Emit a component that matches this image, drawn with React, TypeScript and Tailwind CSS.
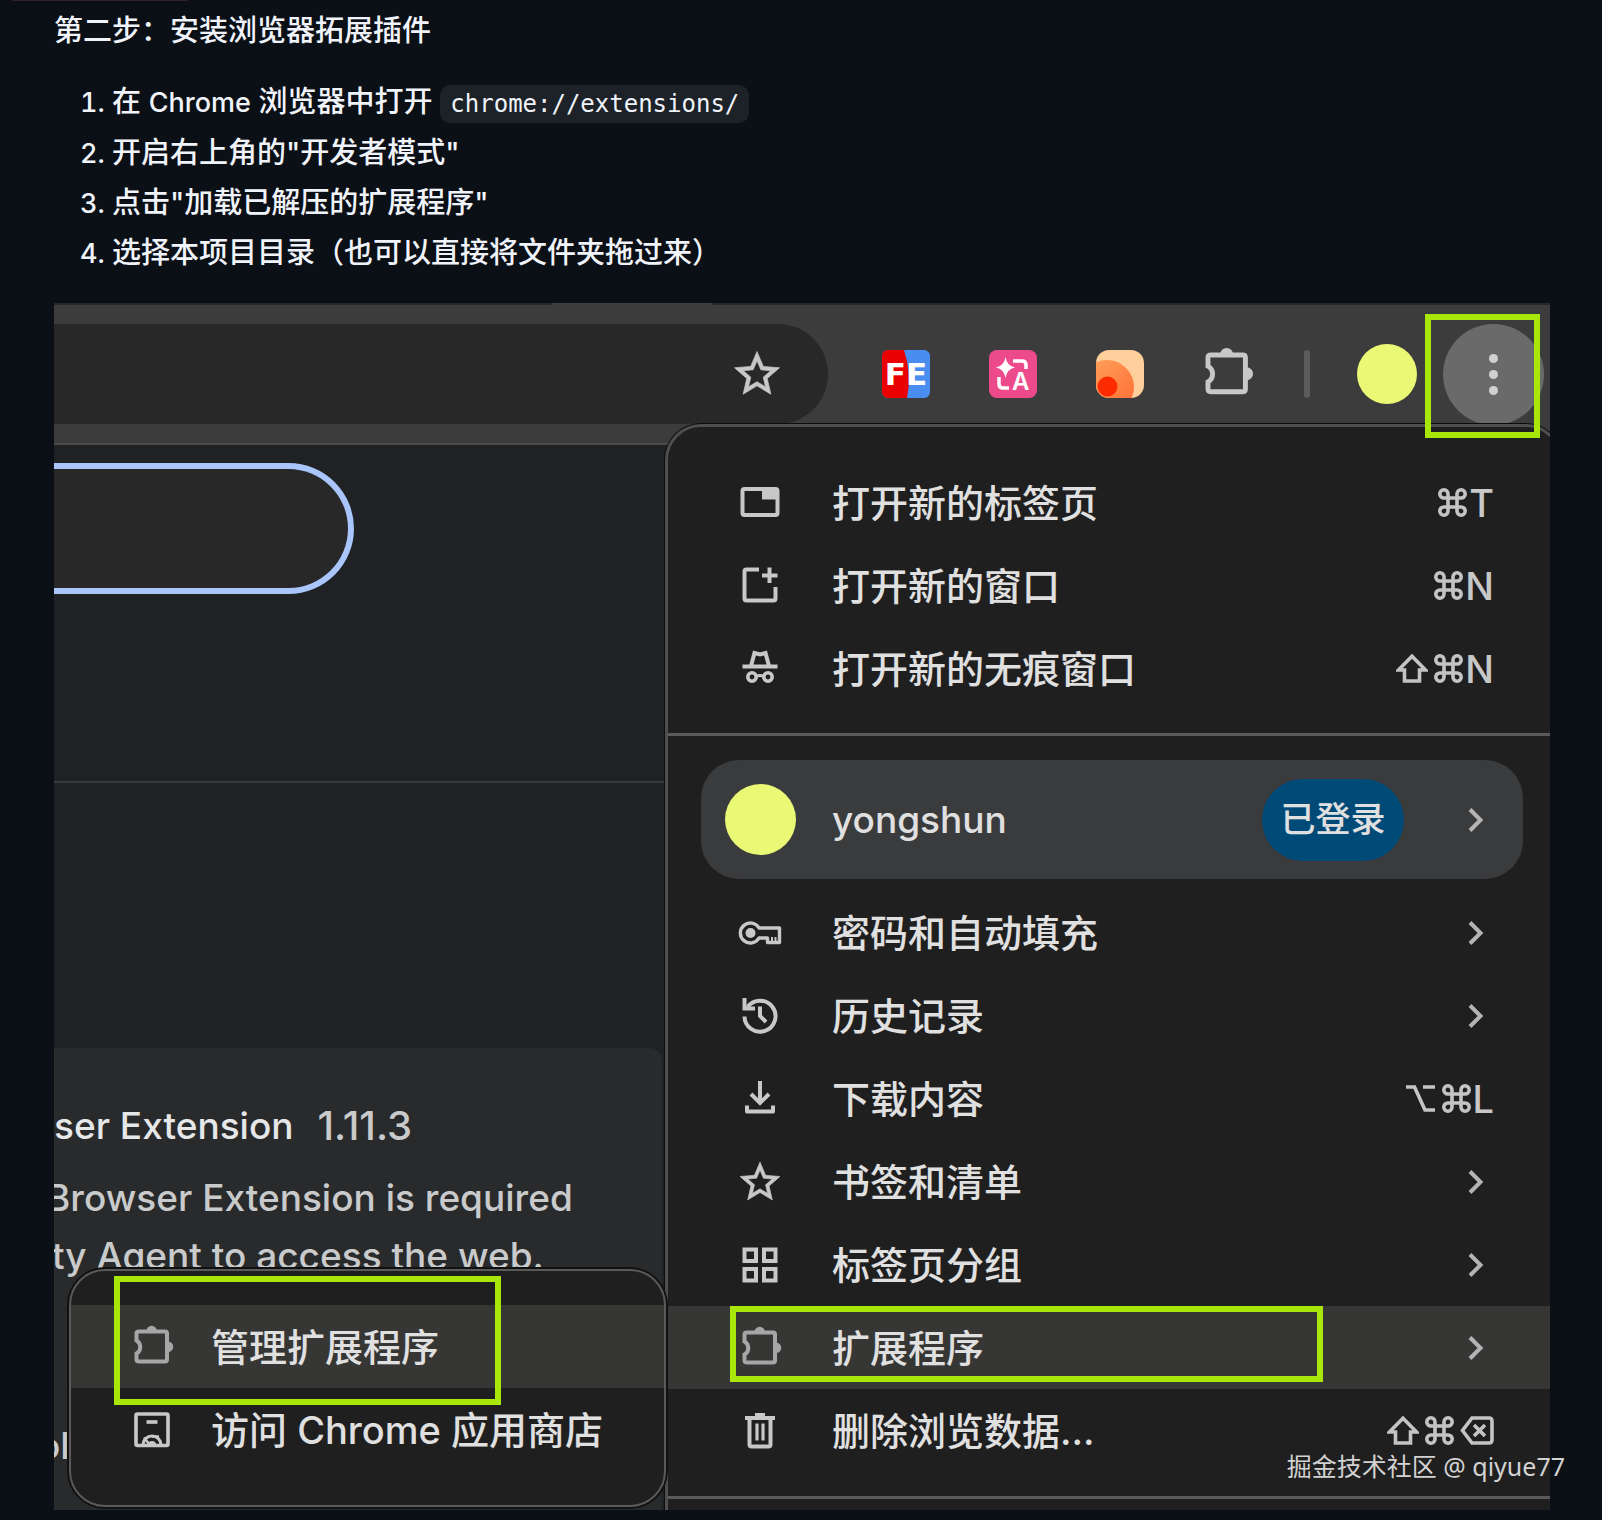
import type { ReactNode } from "react";

type IconProps = { className?: string };

function StarIcon({ className = "" }: IconProps) {
  return (
    <svg viewBox="0 0 24 24" fill="currentColor" className={className}>
      <path
        d="M22 9.24l-7.19-.62L12 2 9.19 8.63 2 9.24l5.46 4.73L5.82 21 12 17.27 18.18 21l-1.63-7.03L22 9.24zM12 15.4l-3.76 2.27 1-4.28-3.32-2.88 4.38-.38L12 6.1l1.71 4.04 4.38.38-3.32 2.88 1 4.28L12 15.4z"
        stroke="currentColor"
        strokeWidth="0.3"
      />
    </svg>
  );
}

function PuzzleIcon({ className = "" }: IconProps) {
  return (
    <svg viewBox="0 0 44 44" fill="none" className={className}>
      <path
        d="M9 6.5H35Q37 6.5 37 8.5V34.5Q37 36.5 35 36.5H9Q6.5 36.5 6.5 34.5V28.5A7.5 7.5 0 0 0 6.5 15.5V8.5Q6.5 6.5 9 6.5Z"
        stroke="currentColor"
        strokeWidth="4"
      />
      <path
        d="M16.5 6A5.2 5.2 0 0 1 26.9 6ZM38 16.5A5.2 5.2 0 0 1 38 27Z"
        fill="currentColor"
      />
    </svg>
  );
}

function LineIcon({ children }: { children: ReactNode }) {
  return (
    <svg
      viewBox="0 0 44 44"
      fill="none"
      stroke="currentColor"
      strokeWidth="4"
      className="size-11"
    >
      {children}
    </svg>
  );
}

function ChevronIcon() {
  return (
    <svg
      viewBox="0 0 36 36"
      fill="none"
      stroke="currentColor"
      strokeWidth="4"
      className="size-9 shrink-0 text-[#b4b4b4]"
    >
      <path d="M12 7.5L22.5 18L12 28.5" />
    </svg>
  );
}

const icons = {
  tab: (
    <LineIcon>
      <rect x="4.5" y="8" width="35" height="26" rx="2" />
      <path d="M24 7H40V18.5H24Z" fill="currentColor" stroke="none" />
    </LineIcon>
  ),
  window: (
    <LineIcon>
      <path d="M21 5.5H8.5Q6.5 5.5 6.5 7.5V34.5Q6.5 36.5 8.5 36.5H35.5Q37.5 36.5 37.5 34.5V23" />
      <path d="M31.5 3.5V19M24 11.5H39.5" />
    </LineIcon>
  ),
  incognito: (
    <LineIcon>
      <path d="M13 19L16.5 6L22 7.5L27.5 6L31 19" />
      <path d="M4.5 19.5H39.5" />
      <circle cx="14" cy="30" r="4.2" strokeWidth="3.6" />
      <circle cx="30" cy="30" r="4.2" strokeWidth="3.6" />
      <path d="M18 29.5Q22 27.5 26 29.5" strokeWidth="3" />
    </LineIcon>
  ),
  key: (
    <LineIcon>
      <path
        d="M21 17H41.5V31.5H29.5V27H21A10 10 0 1 1 21 17Z"
        strokeWidth="3.4"
        strokeLinejoin="round"
      />
      <circle cx="12.5" cy="22" r="5" fill="currentColor" stroke="none" />
      <path d="M34 31V26M37.5 31V26" strokeWidth="2" />
    </LineIcon>
  ),
  history: (
    <LineIcon>
      <path d="M6.5 22.5A15.5 15.5 0 1 0 9.5 13" />
      <path d="M6.5 4V14.5H17" />
      <path d="M22 12.5V22L28 28" />
    </LineIcon>
  ),
  download: (
    <LineIcon>
      <path d="M22 4V25M13 17L22 26L31 17" />
      <path d="M9 28.5V34.5H35V28.5" strokeLinejoin="round" />
    </LineIcon>
  ),
  star: <StarIcon className="-m-0.5 size-12" />,
  groups: (
    <LineIcon>
      <rect x="6.5" y="6.5" width="11.5" height="11.5" />
      <rect x="26" y="6.5" width="11.5" height="11.5" />
      <rect x="6.5" y="26" width="11.5" height="11.5" />
      <rect x="26" y="26" width="11.5" height="11.5" />
    </LineIcon>
  ),
  puzzle: <PuzzleIcon className="size-11 text-[#a6a6a6]" />,
  trash: (
    <LineIcon>
      <path d="M7 9H37" />
      <path d="M17 6H27" />
      <path d="M11.5 9V35.5Q11.5 37.5 13.5 37.5H30.5Q32.5 37.5 32.5 35.5V9" />
      <path d="M19 14.5V31.5M25 14.5V31.5" strokeWidth="3.2" />
    </LineIcon>
  ),
  store: (
    <LineIcon>
      <rect x="6" y="6" width="32" height="31.5" rx="1.5" strokeWidth="3.6" />
      <path d="M16.5 14H27.5" strokeWidth="3.6" />
      <path d="M13 37A9 9 0 0 1 31 37" strokeWidth="3" />
      <path d="M18 37A4 4 0 0 1 26 37" fill="currentColor" stroke="none" />
      <path d="M14 29.5L19 36M22 28.5H29" strokeWidth="2.6" />
    </LineIcon>
  ),
};

// modifier keys of the shortcuts
const keySymbols = {
  shift: (
    <svg viewBox="0 0 32 29" role="img" aria-label="⇧" className="h-[29px] w-8">
      <path d="M16 2.2L29.5 16H23.5V27H8.5V16H2.5Z" />
    </svg>
  ),
  command: (
    <svg viewBox="0 0 29 29" role="img" aria-label="⌘" className="size-[29px]">
      <path d="M10 10V6A4.1 4.1 0 1 0 6 10H23A4.1 4.1 0 1 0 19 6V23A4.1 4.1 0 1 0 23 19H6A4.1 4.1 0 1 0 10 23Z" />
    </svg>
  ),
  option: (
    <svg viewBox="0 0 31 29" role="img" aria-label="⌥" className="h-[29px] w-[31px]">
      <path d="M1 3H9.5L20 26H30M18 3H30" />
    </svg>
  ),
  delete: (
    <svg viewBox="0 0 34 29" role="img" aria-label="⌫" className="h-[29px] w-[34px]">
      <path d="M12 2H29Q32 2 32 5V24Q32 27 29 27H12L2.5 14.5Z" />
      <path d="M14 9L25 20M25 9L14 20" />
    </svg>
  ),
};

type MenuRow = {
  icon: keyof typeof icons;
  label: string;
  keys?: (keyof typeof keySymbols)[];
  letter?: string;
};

const newItems: MenuRow[] = [
  { icon: "tab", label: "打开新的标签页", keys: ["command"], letter: "T" },
  { icon: "window", label: "打开新的窗口", keys: ["command"], letter: "N" },
  {
    icon: "incognito",
    label: "打开新的无痕窗口",
    keys: ["shift", "command"],
    letter: "N",
  },
];

const toolItems: MenuRow[] = [
  { icon: "key", label: "密码和自动填充" },
  { icon: "history", label: "历史记录" },
  {
    icon: "download",
    label: "下载内容",
    keys: ["option", "command"],
    letter: "L",
  },
  { icon: "star", label: "书签和清单" },
  { icon: "groups", label: "标签页分组" },
  { icon: "puzzle", label: "扩展程序" },
  {
    icon: "trash",
    label: "删除浏览数据...",
    keys: ["shift", "command", "delete"],
  },
];

function MenuItem({ icon, label, keys, letter }: MenuRow) {
  const active = icon === "puzzle";

  return (
    <button
      type="button"
      className={`relative flex h-[83px] w-full items-center pl-[70px] pr-[65px] text-left ${
        active ? "bg-[#363635]" : ""
      }`}
    >
      <span className="shrink-0 text-[#c8c8c8]">{icons[icon]}</span>
      <span className="ml-[50px] flex-1 whitespace-nowrap text-[38px] leading-[56px]">
        {label}
      </span>
      {keys ? (
        <span className="flex items-center gap-1.5 fill-none stroke-[#c4c4c4] stroke-[3.6] text-[38px] leading-[56px] text-[#c8c8c8]">
          {keys.map((key) => (
            <span key={key}>{keySymbols[key]}</span>
          ))}
          {letter && <span className="-ml-1 stroke-none">{letter}</span>}
        </span>
      ) : (
        <ChevronIcon />
      )}
      {active && (
        <span className="absolute left-[62px] top-0 h-[76px] w-[593px] border-6 border-[#a9e70b]" />
      )}
    </button>
  );
}

function Toolbar() {
  return (
    <div className="relative flex h-[142px] items-center border-y-2 border-b-[#4a4a4a] border-t-[#25272a] bg-[#3c3c3c] pr-1.5">
      <div className="absolute -top-0.5 left-[498px] h-0.5 w-[160px] bg-[#3c3f41]" />

      <div className="flex h-[100px] flex-1 items-center justify-end rounded-r-full bg-[#282828] pr-11">
        <button type="button" aria-label="书签" className="text-[#c8c8c8]">
          <StarIcon className="size-[54px]" />
        </button>
      </div>

      <button
        type="button"
        className="relative ml-[54px] flex size-12 shrink-0 items-center justify-center overflow-hidden rounded-md bg-[#4a8df0]"
      >
        <svg viewBox="0 0 48 48" className="absolute inset-0">
          <path d="M0 0H22Q30 24 25 48H0Z" fill="#ea0000" />
        </svg>
        <span className="relative font-['DejaVu_Sans',sans-serif] text-[31px] font-bold leading-none text-white">
          FE
        </span>
      </button>

      <button type="button" aria-label="翻译" className="ml-[59px] shrink-0">
        <svg viewBox="0 0 48 48" className="size-12">
          <rect width="48" height="48" rx="8" fill="#ec4a8b" />
          <path
            d="M16.5 7Q18 16 26 17.5Q18 19 16.5 28Q15 19 7 17.5Q15 16 16.5 7Z"
            fill="#fff"
          />
          <path
            d="M24 11H33Q37 11 37 15V19M10 27V34Q10 38 14 38H20"
            fill="none"
            stroke="#fff"
            strokeWidth="3.5"
          />
          <text
            x="23"
            y="40"
            fill="#fff"
            fontSize="24"
            fontWeight="600"
            fontFamily="Inter, sans-serif"
          >
            A
          </text>
        </svg>
      </button>

      <button type="button" aria-label="扩展" className="ml-[59px] shrink-0">
        <svg viewBox="0 0 48 48" className="size-12">
          <defs>
            <clipPath id="tile">
              <rect width="48" height="48" rx="13" />
            </clipPath>
            <linearGradient id="ring" x1="0" y1="0" x2="1" y2="1">
              <stop offset="0" stopColor="#ffa65c" />
              <stop offset="1" stopColor="#ff6a35" />
            </linearGradient>
          </defs>
          <g clipPath="url(#tile)">
            <rect width="48" height="48" fill="#ffcf9c" />
            <circle cx="11" cy="37" r="27" fill="url(#ring)" />
            <circle cx="11.5" cy="36.5" r="10" fill="#ff2b00" />
          </g>
        </svg>
      </button>

      <button
        type="button"
        aria-label="扩展程序"
        className="ml-14 shrink-0 text-[#c8c8c8]"
      >
        <PuzzleIcon className="size-[54px]" />
      </button>

      <div className="ml-[50px] h-12 w-1.5 shrink-0 rounded-full bg-[#5c5c5c]" />

      <div className="ml-[47px] size-[60px] shrink-0 rounded-full bg-[#e9f975]" />

      <button
        type="button"
        aria-label="更多"
        className="relative ml-[26px] flex size-[101px] shrink-0 flex-col items-center justify-center gap-[7px] rounded-full bg-[#6a6a6a]"
      >
        <span className="size-[9px] rounded-full bg-[#d0d0d0]" />
        <span className="size-[9px] rounded-full bg-[#d0d0d0]" />
        <span className="size-[9px] rounded-full bg-[#d0d0d0]" />
        <span className="absolute -left-[18px] -top-2.5 z-20 h-[124px] w-[115px] border-6 border-[#a9e70b]" />
      </button>
    </div>
  );
}

function ExtensionsPage() {
  return (
    <div className="w-[612px] text-[37px] leading-[58px] text-[#c9cacb]">
      <div className="mt-[18px] h-[131px] w-[300px] rounded-r-full border-y-6 border-r-6 border-[#a9c5fb] bg-[#282828]" />
      <div className="mt-[187px] h-0.5 bg-[#38393b]" />
      <div className="mr-1 mt-[265px] whitespace-nowrap rounded-tr-xl bg-[#292a2c] pb-[35px] pt-[49px]">
        <div className="flex gap-6">
          <span className="text-[#e6e7e8]">ser Extension</span>
          <span className="text-[40px]">1.11.3</span>
        </div>
        <p className="-ml-2 mt-3.5">Browser Extension is required</p>
        <p className="-ml-0.5">ty Agent to access the web.</p>
        <p className="-ml-4 mt-[132px]">ol</p>
      </div>
    </div>
  );
}

function ChromeMenu() {
  return (
    <div className="absolute -bottom-6 -right-3 left-[611px] top-[121px] z-10 rounded-t-[36px] border-3 border-[#4e4e4e] bg-[#1f1f1f] pt-[34px] text-[#e0e0e0] shadow-[0_0_0_1px_#0c0c0c]">
      {newItems.map((item) => (
        <MenuItem key={item.label} {...item} />
      ))}

      <div className="mt-[23px] h-[3px] bg-[#5a5a5a]" />

      <button
        type="button"
        className="mb-3 ml-[33px] mr-9 mt-6 flex h-[119px] w-[822px] items-center rounded-[38px] bg-[#3a3b3d] pl-6 pr-[29px] text-left"
      >
        <span className="size-[71px] shrink-0 rounded-full bg-[#e9f975]" />
        <span className="ml-9 flex-1 text-[37px] leading-[56px]">yongshun</span>
        <span className="mr-[54px] flex h-[82px] w-[142px] items-center justify-center rounded-full bg-[#004a77] text-[35px]">
          已登录
        </span>
        <ChevronIcon />
      </button>

      {toolItems.map((item) => (
        <MenuItem key={item.label} {...item} />
      ))}

      <div className="mt-6 h-[3px] bg-[#5a5a5a]" />
    </div>
  );
}

function SubMenu() {
  return (
    <div className="absolute left-[15px] top-[966px] z-10 w-[597px] rounded-[36px] border-2 border-[#5a5a5a] bg-[#1f1f1f] py-[34px] text-[38px] leading-[56px] text-[#e0e0e0] shadow-[0_0_0_2px_#111]">
      <button
        type="button"
        className="relative flex h-[83px] w-full items-center bg-[#363635] pl-[59px]"
      >
        {icons.puzzle}
        <span className="ml-[37px]">管理扩展程序</span>
        <span className="absolute -top-[29px] left-[43px] z-10 h-[129px] w-[387px] border-6 border-[#a9e70b]" />
      </button>
      <button
        type="button"
        className="flex h-[83px] w-full items-center pl-[59px]"
      >
        <span className="text-[#c8c8c8]">{icons.store}</span>
        <span className="ml-[37px] whitespace-nowrap">
          访问 Chrome 应用商店
        </span>
      </button>
    </div>
  );
}

export default function App() {
  return (
    <main className="relative min-h-screen bg-[#0b0f16] pb-2.5 pl-[54px] pr-[52px] font-[Inter,'Noto_Sans_CJK_SC',sans-serif] font-medium text-[#f0f4fa]">
      <div className="absolute left-3 top-0 h-px w-44 bg-[#33202a]" />
      <p className="text-[29px] leading-[62px]">第二步：安装浏览器拓展插件</p>

      <ol className="mt-[15px] list-decimal pl-[58px] text-[29px] leading-[50px] marker:text-[27px]">
        <li>
          在 <span className="text-[27px]">Chrome</span> 浏览器中打开{" "}
          <code className="rounded-[10px] bg-[#1d2229] px-2.5 py-[5px] font-['DejaVu_Sans_Mono',monospace] text-[24px] leading-6">
            chrome://extensions/
          </code>
        </li>
        <li>开启右上角的"开发者模式"</li>
        <li>点击"加载已解压的扩展程序"</li>
        <li>选择本项目目录（也可以直接将文件夹拖过来）</li>
      </ol>

      <div className="relative mt-[25px] overflow-hidden bg-[#1f2124]">
        <Toolbar />
        <ExtensionsPage />
        <ChromeMenu />
        <SubMenu />
      </div>

      <p className="absolute bottom-[34px] right-[37px] z-20 font-['Noto_Sans','Noto_Sans_CJK_SC',sans-serif] text-[25px] font-normal leading-10 text-[#d2d2d2]">
        掘金技术社区 @ qiyue77
      </p>
    </main>
  );
}
